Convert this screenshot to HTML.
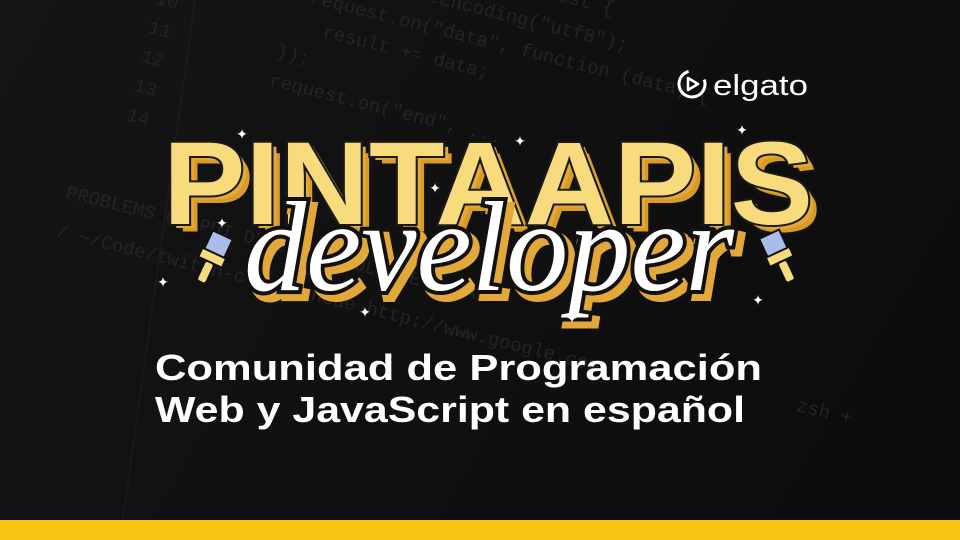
<!DOCTYPE html>
<html><head><meta charset="utf-8"><style>
html,body{margin:0;padding:0;background:#0e0e0e;}
.wrap{position:relative;width:960px;height:540px;overflow:hidden;background:linear-gradient(120deg,#151515 0%,#101010 50%,#0c0c0c 100%);}
svg{position:absolute;left:0;top:0}
</style></head><body><div class="wrap">
<svg width="960" height="540" viewBox="0 0 960 540" xmlns="http://www.w3.org/2000/svg">
<g font-family="Liberation Mono, monospace" font-size="19" fill="#242424" transform="rotate(14 480 270)">
<text x="250" y="-10">let result = "";      request  {</text>
<text x="250" y="22">request.setEncoding("utf8");</text>
<text x="250" y="52">request.on("data", function (data) {</text>
<text x="270" y="82">result += data;</text>
<text x="230" y="112">});</text>
<text x="230" y="142">request.on("end", ...</text>
<text x="100" y="60">9</text><text x="100" y="90">10</text><text x="100" y="120">11</text><text x="100" y="150">12</text><text x="100" y="180">13</text><text x="100" y="210">14</text>
<text x="60" y="300">PROBLEMS   OUTPUT   DEBUG CONSOLE   TERMINAL</text>
<text x="60" y="340">/ ~/Code/twitch-course   node http://www.google.com</text>
<text x="820" y="330">zsh  +</text>
</g>
<line x1="195" y1="0" x2="120" y2="540" stroke="#1a1a1a" stroke-width="2"/>
<g stroke="#fff" fill="none" stroke-width="3">
<circle cx="692" cy="84" r="13" stroke-dasharray="62 20" transform="rotate(-20 692 84)"/>
<path d="M688 78 L698 84 L688 90 Z" stroke-width="2.6" stroke-linejoin="round"/>
</g>
<text x="713" y="95" font-family="Liberation Sans, sans-serif" font-size="29" fill="#fff" textLength="95" lengthAdjust="spacingAndGlyphs">elgato</text>
<g font-family="Liberation Sans, sans-serif" font-weight="bold" font-size="118">
<text x="173" y="233" fill="#d99a26" stroke="#111" stroke-width="3" textLength="650" lengthAdjust="spacingAndGlyphs">PINTAAPIS</text>
<text x="168" y="228" fill="#e3a83a" textLength="650" lengthAdjust="spacingAndGlyphs">PINTAAPIS</text>
<text x="163" y="224" fill="#f8db7c" stroke="#1a1a1a" stroke-width="4" paint-order="stroke" textLength="650" lengthAdjust="spacingAndGlyphs">PINTAAPIS</text>
</g>
<g font-family="Liberation Serif, serif" font-style="italic" font-size="128">
<text x="250" y="296" fill="#e3a83a" stroke="#e3a83a" stroke-width="10" textLength="490" lengthAdjust="spacingAndGlyphs">developer</text>
<text x="244" y="290" fill="#fff" stroke="#111" stroke-width="8" textLength="490" lengthAdjust="spacingAndGlyphs">developer</text>
<text x="244" y="290" fill="#fff" textLength="490" lengthAdjust="spacingAndGlyphs">developer</text>
</g>
<g transform="rotate(25 210 260)">
<rect x="200" y="232" width="22" height="22" fill="#a9bde8" stroke="#111" stroke-width="2"/>
<rect x="198" y="252" width="26" height="10" fill="#f8db7c" stroke="#111" stroke-width="2"/>
<rect x="206" y="262" width="10" height="22" rx="3" fill="#f8db7c" stroke="#111" stroke-width="2"/>
</g>
<g transform="rotate(-25 780 260)">
<rect x="770" y="232" width="22" height="22" fill="#a9bde8" stroke="#111" stroke-width="2"/>
<rect x="768" y="252" width="26" height="10" fill="#f8db7c" stroke="#111" stroke-width="2"/>
<rect x="776" y="262" width="10" height="22" rx="3" fill="#f8db7c" stroke="#111" stroke-width="2"/>
</g>
<g fill="#fff" font-family="DejaVu Sans, sans-serif" font-size="14" text-anchor="middle">
<text x="242" y="139">✦</text><text x="520" y="146">✦</text><text x="742" y="135">✦</text>
<text x="435" y="193">✦</text><text x="222" y="228">✦</text><text x="163" y="287">✦</text>
<text x="365" y="317">✦</text><text x="572" y="323">✦</text><text x="758" y="305">✦</text>
</g>
<g font-family="Liberation Sans, sans-serif" font-weight="bold" font-size="36" fill="#fff">
<text x="155" y="380" textLength="607" lengthAdjust="spacingAndGlyphs">Comunidad de Programación</text>
<text x="155" y="422" textLength="590" lengthAdjust="spacingAndGlyphs">Web y JavaScript en español</text>
</g>
<rect x="0" y="520" width="960" height="20" fill="#f6c514"/>
</svg>
</div></body></html>
